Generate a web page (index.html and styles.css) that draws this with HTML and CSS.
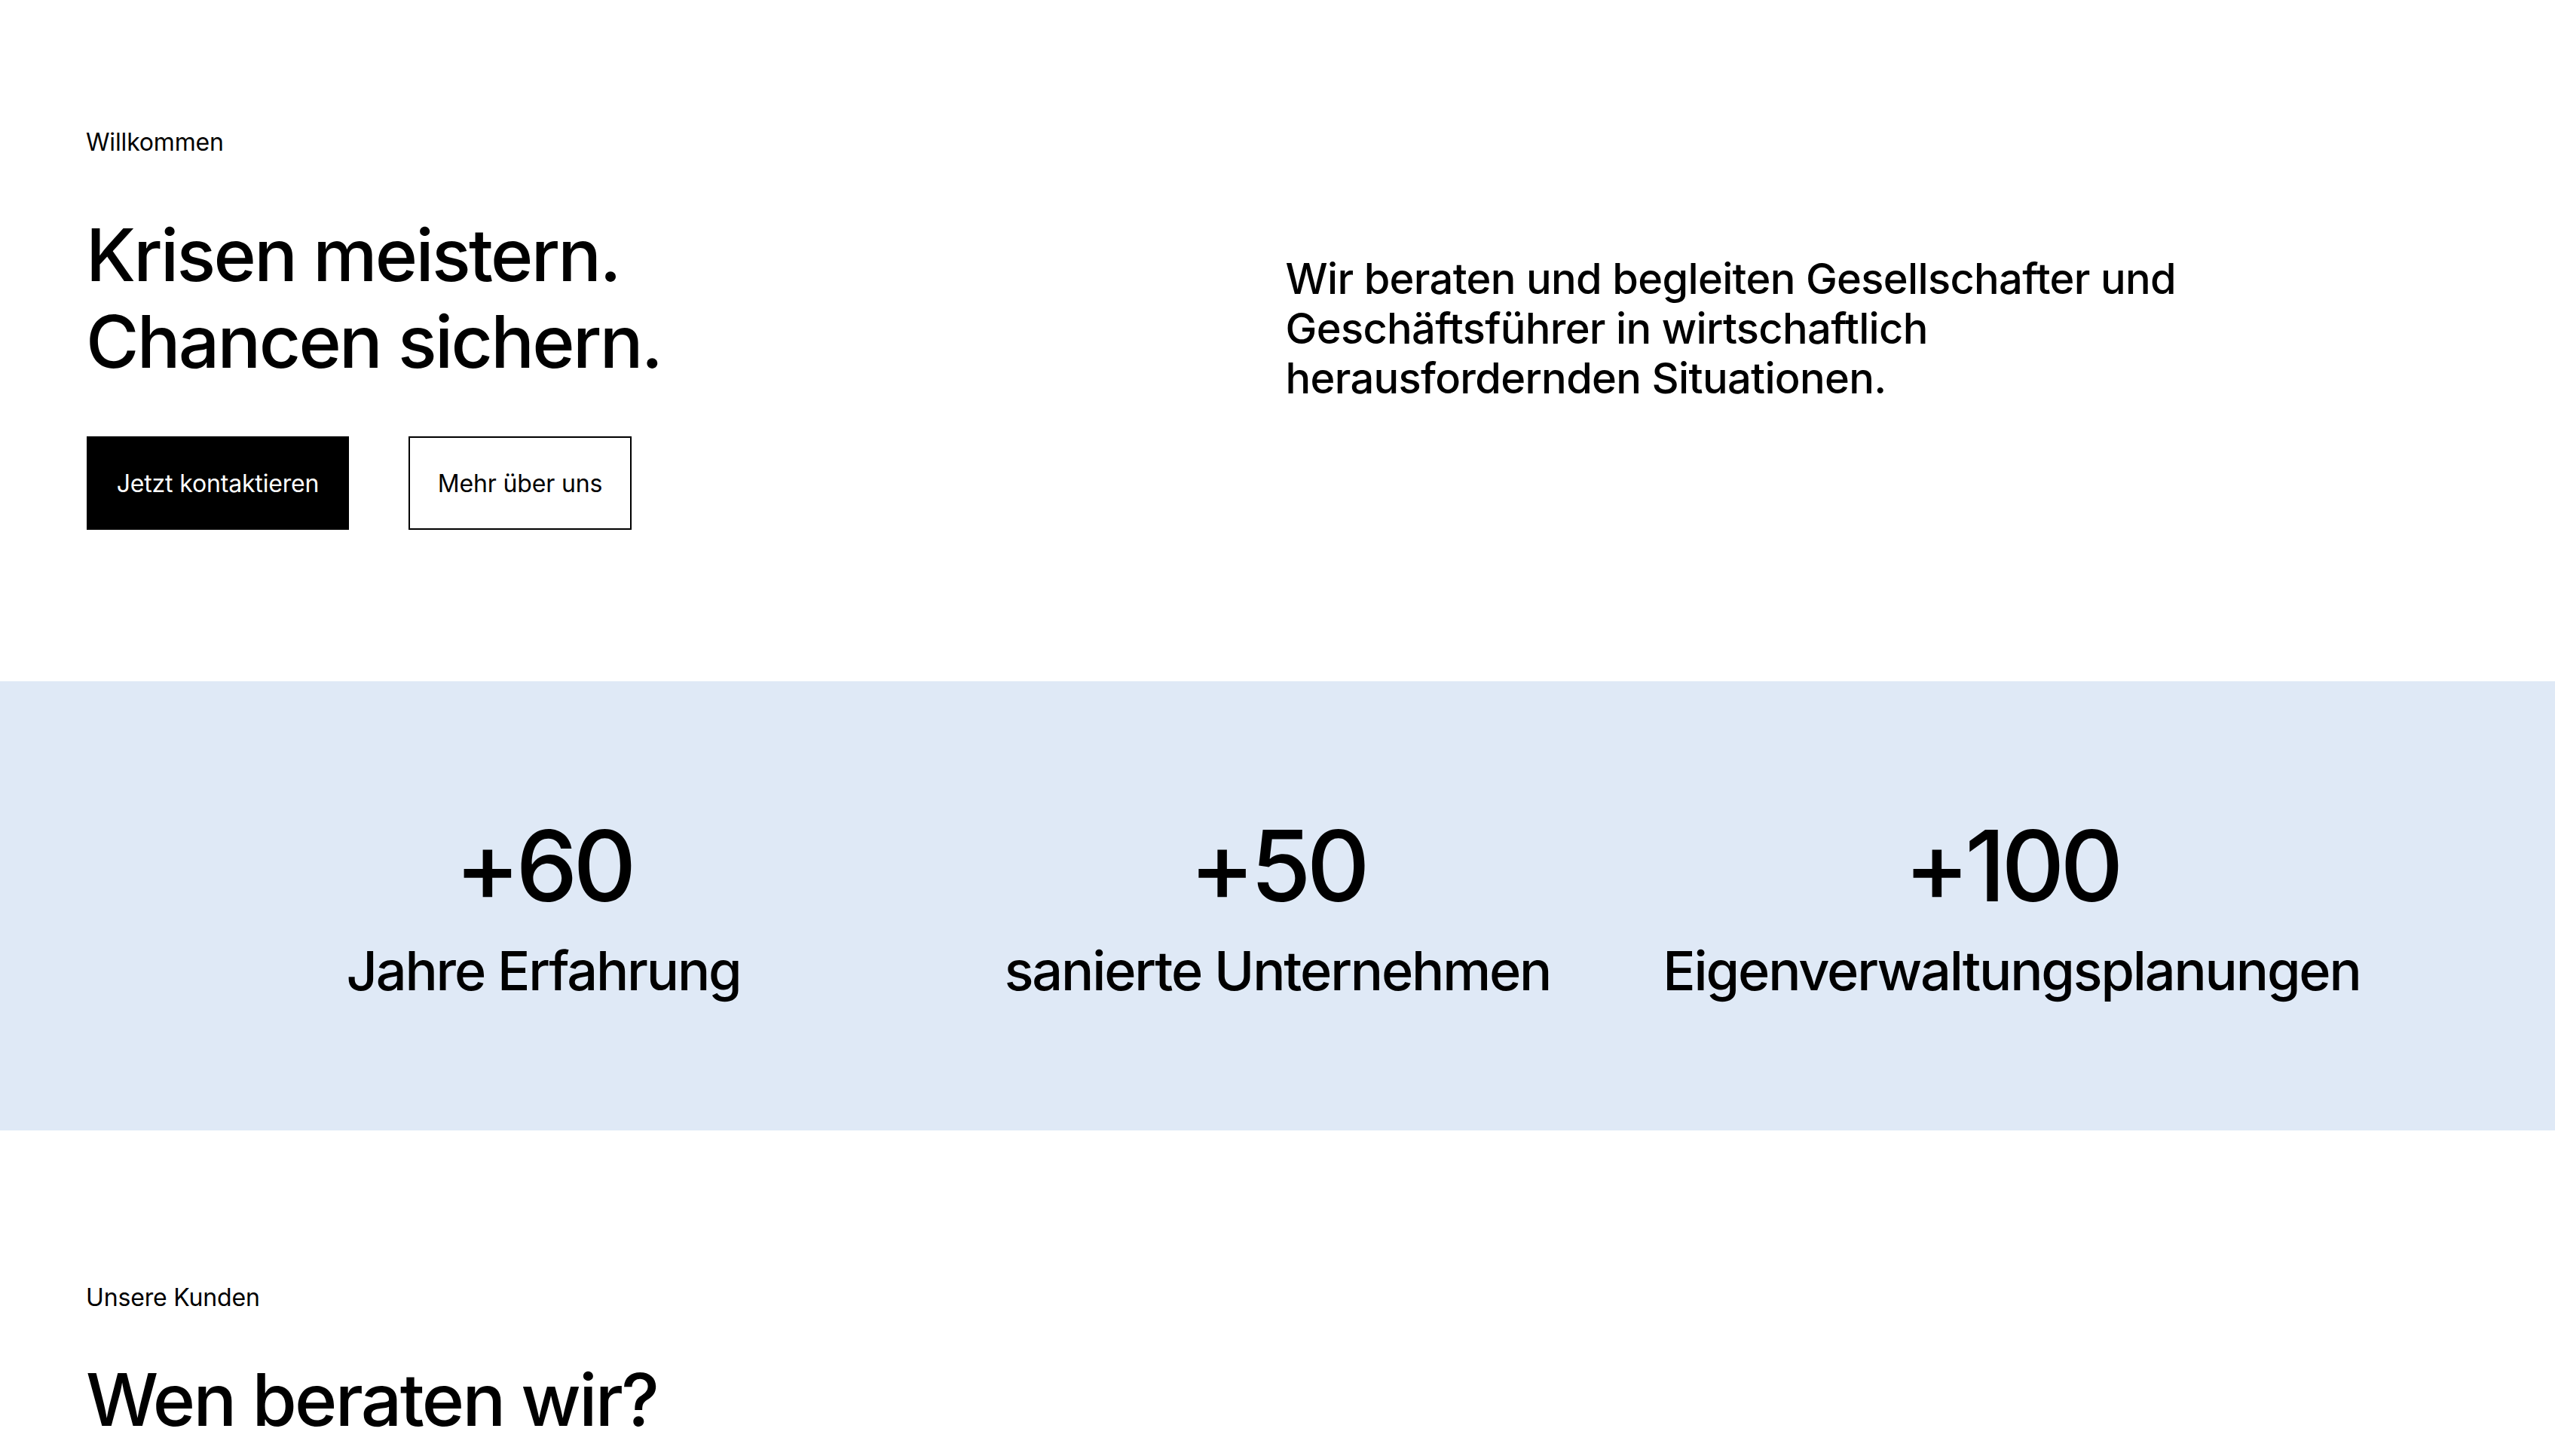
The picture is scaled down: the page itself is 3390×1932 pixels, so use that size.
FILE: index.html
```html
<!DOCTYPE html>
<html lang="de">
<head>
<meta charset="utf-8">
<title>Krisen meistern. Chancen sichern.</title>
<link rel="stylesheet" href="styles.css">
</head>
<body>
<section class="hero">
  <div class="hero-left">
    <p class="eyebrow">Willkommen</p>
    <h1 class="headline">Krisen meistern.<br>Chancen sichern.</h1>
    <div class="actions">
      <a class="btn btn-primary" href="#">Jetzt kontaktieren</a>
      <a class="btn btn-outline" href="#">Mehr über uns</a>
    </div>
  </div>
  <div class="hero-right">
    <p class="lead">Wir beraten und begleiten Gesellschafter und Geschäftsführer in wirtschaftlich herausfordernden Situationen.</p>
  </div>
</section>

<section class="stats">
  <div class="stat">
    <div class="stat-num">+60</div>
    <div class="stat-label">Jahre Erfahrung</div>
  </div>
  <div class="stat">
    <div class="stat-num">+50</div>
    <div class="stat-label">sanierte Unternehmen</div>
  </div>
  <div class="stat">
    <div class="stat-num">+100</div>
    <div class="stat-label">Eigenverwaltungsplanungen</div>
  </div>
</section>

<section class="clients">
  <p class="eyebrow">Unsere Kunden</p>
  <h2 class="headline headline-2">Wen beraten wir?</h2>
</section>
</body>
</html>
```

FILE: styles.css
```css
* { box-sizing: border-box; }
html, body { margin: 0; padding: 0; background: #ffffff; }
body {
  font-family: Inter, "Noto Sans", "Liberation Sans", sans-serif;
  color: #000000;
}
p, h1, h2 { margin: 0; }

.hero {
  display: grid;
  grid-template-columns: 1fr 1fr;
  column-gap: 18px;
  align-items: center;
  padding: 169px 115px 201px 114px;
}

.eyebrow {
  font-size: 32px;
  line-height: 39px;
  font-weight: 400;
  letter-spacing: -0.005em;
}

.headline {
  margin-top: 73px;
  font-size: 96px;
  line-height: 115px;
  font-weight: 500;
  letter-spacing: -0.028em;
}

.actions {
  display: flex;
  gap: 80px;
  margin-top: 68px;
}

.btn {
  display: inline-flex;
  align-items: center;
  justify-content: center;
  height: 124px;
  padding: 0 30px;
  font-size: 32px;
  font-weight: 400;
  letter-spacing: -0.005em;
  text-decoration: none;
}
.btn-primary {
  width: 348px;
  background: #000000;
  color: #ffffff;
  margin-left: 1px;
}
.btn-outline {
  width: 296px;
  background: #ffffff;
  color: #000000;
  border: 2px solid #000000;
  margin-left: -1px;
}

.hero-right {
  padding-left: 2px;
}
.lead {
  max-width: 1260px;
  font-size: 56px;
  line-height: 66px;
  font-weight: 500;
  letter-spacing: -0.012em;
}

.stats {
  display: grid;
  grid-template-columns: repeat(3, 1fr);
  background: #dfe9f6;
  padding: 180px 234px 169px;
  text-align: center;
}
.stat-num {
  font-size: 130px;
  line-height: 130px;
  font-weight: 500;
  letter-spacing: -0.045em;
}
.stat-label {
  margin-top: 31px;
  font-size: 72px;
  line-height: 86px;
  font-weight: 500;
  letter-spacing: -0.03em;
}

.clients {
  padding: 202px 114px 0;
}
.headline-2 {
  margin-top: 59px;
}
```
